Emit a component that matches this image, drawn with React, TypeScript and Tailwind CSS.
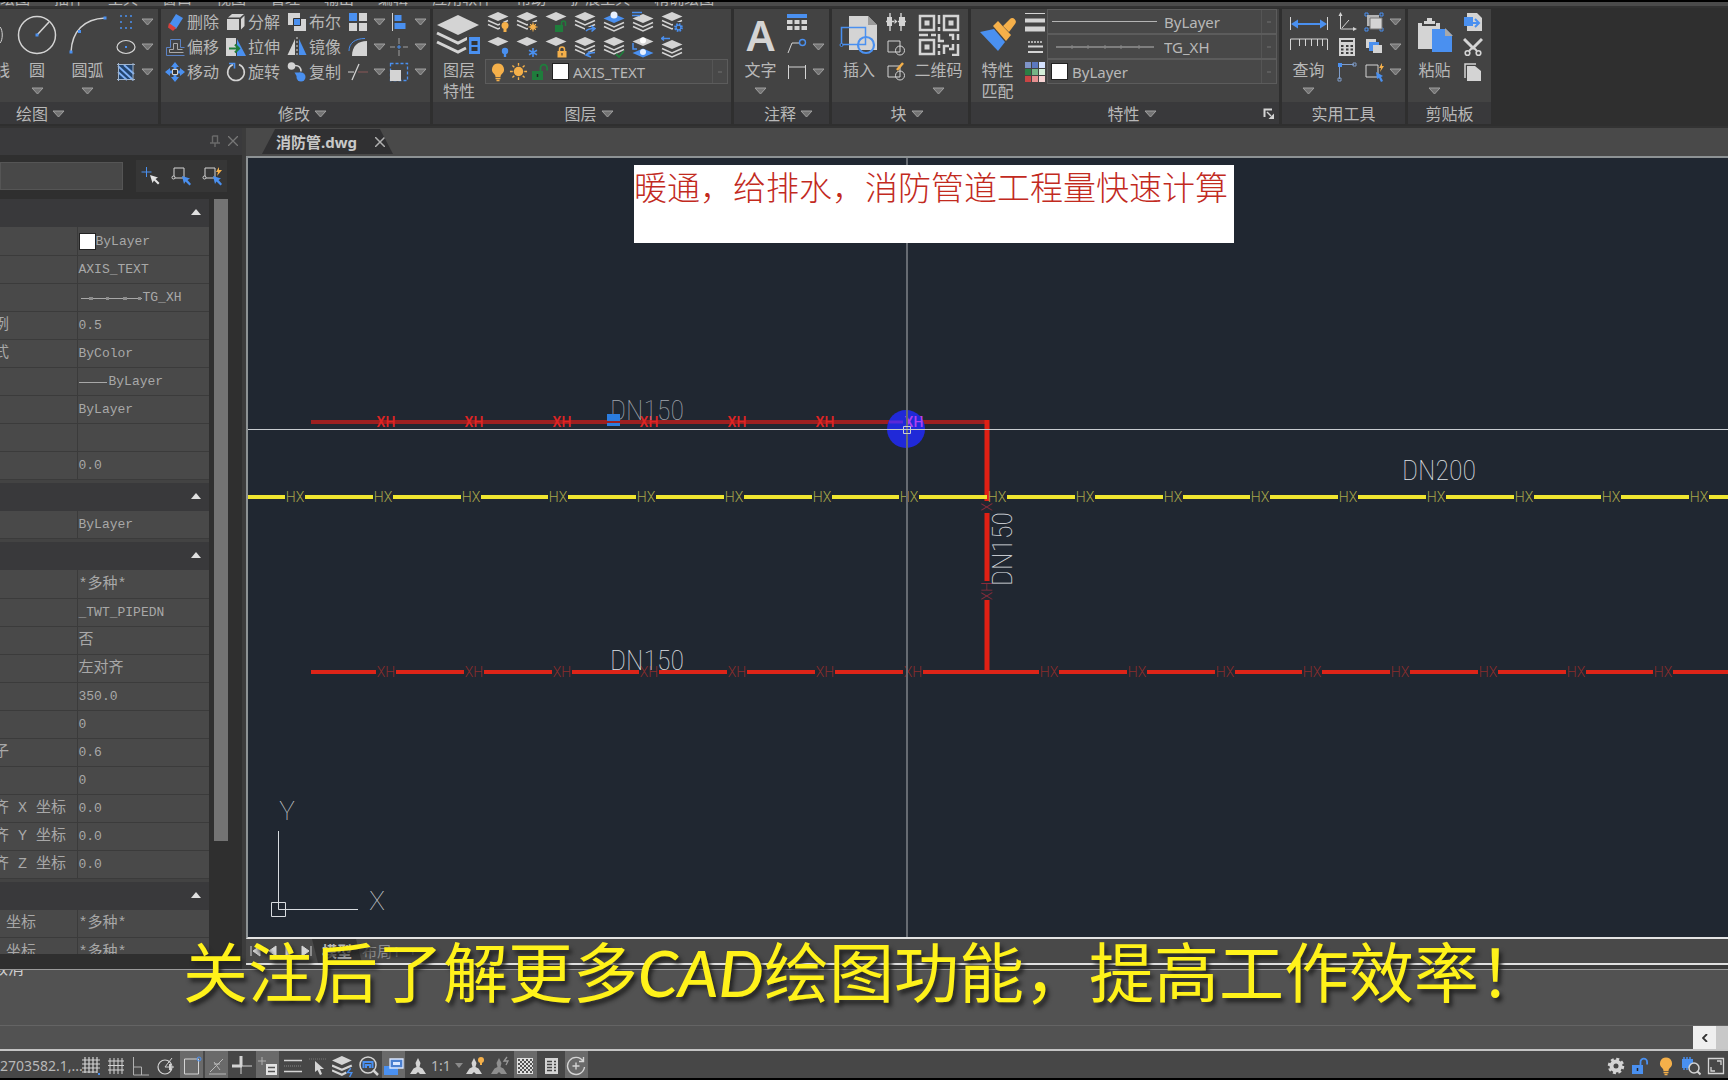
import type { ReactNode } from 'react'

const W = '#d4d4d4'
const B = '#4a90f0'
const O = '#f5b04a'
const G = '#1f7d3c'

interface IconProps {
  children: ReactNode
  className?: string
  box?: string
}

function Icon({ children, className = 'size-5', box = '0 0 20 20' }: IconProps) {
  return (
    <svg viewBox={box} className={`${className} shrink-0`} fill="none" aria-hidden="true">
      {children}
    </svg>
  )
}

function Caret() {
  return (
    <svg viewBox="0 0 13 8" className="h-2 w-[13px] shrink-0" aria-hidden="true">
      <path d="M1 1h11L6.500 7z" fill="#747474" stroke="#a0a0a0" />
    </svg>
  )
}

/* ---------- ribbon building blocks ---------- */

interface PanelProps {
  title: string
  width: string
  caret?: boolean
  corner?: boolean
  titleClass?: string
  children: ReactNode
}

function Panel({ title, width, caret = true, corner, titleClass, children }: PanelProps) {
  const align = titleClass ?? (caret ? 'justify-center pl-3.5' : 'justify-center')
  return (
    <section className={`${width} flex shrink-0 flex-col bg-[#434343]`}>
      <div className="flex h-[93px]">{children}</div>
      <div className={`flex h-[22px] items-center gap-1 bg-[#39393b] pt-0.5 ${align}`}>
        <span>{title}</span>
        {caret && <Caret />}
        {corner && (
          <button aria-label="特性设置" className="absolute right-1">
            <Icon className="h-3 w-3" box="0 0 12 12">
              <path d="M1.500 9V1.500H9" stroke={W} strokeWidth="2" />
              <path d="M4 4l4 4" stroke={W} strokeWidth="1.500" />
              <path d="M11 5.500V11H5.500z" fill={W} />
            </Icon>
          </button>
        )}
      </div>
    </section>
  )
}

interface BigProps {
  icon: ReactNode
  lines: string[]
  width: string
  caret?: boolean
}

function BigButton({ icon, lines, width, caret }: BigProps) {
  return (
    <button className={`${width} flex shrink-0 flex-col items-center pt-px`}>
      <span className="flex h-[50px] items-center justify-center">{icon}</span>
      {lines.map(l => (
        <span key={l} className="h-[21px] leading-[21px] whitespace-nowrap">{l}</span>
      ))}
      {caret && <span className="flex h-5 items-center"><Caret /></span>}
    </button>
  )
}

function Tool({ icon, label }: { icon: ReactNode; label: string }) {
  return (
    <button className="flex h-[25px] w-[61px] items-center gap-0.5 whitespace-nowrap">
      {icon}
      <span>{label}</span>
    </button>
  )
}

function SplitTool({ icon, label, caret = true }: { icon: ReactNode; label: string; caret?: boolean }) {
  return (
    <button aria-label={label} className="flex h-[25px] items-center gap-[5px]">
      {icon}
      {caret && <Caret />}
    </button>
  )
}

function Combo({ label, value, children }: { label: string; value: string; children?: ReactNode }) {
  return (
    <div className="flex h-[25px] items-center border border-[#5c5c5c] bg-[#484848]">
      {children}
      <select aria-label={label} className="min-w-0 flex-1 appearance-none bg-transparent text-[15px] leading-5">
        <option>{value}</option>
      </select>
      <span className="flex h-full w-[15px] items-center justify-center border-l border-[#555]">
        <span className="h-0.5 w-1 bg-[#5c5c5c]" />
      </span>
    </div>
  )
}

function Swatch() {
  return <span className="size-[17px] shrink-0 border border-[#222] bg-white" />
}

/* ---------- icons ---------- */

function Bulb({ color = O, className = 'h-5 w-4' }: { color?: string; className?: string }) {
  return (
    <Icon className={className} box="0 0 16 20">
      <path d="M8 1.500a6 6 0 0 0-3.600 10.800c.8.8 1.100 1.700 1.100 2.700h5c0-1 .3-1.900 1.100-2.700A6 6 0 0 0 8 1.500z" fill={color} />
      <path d="M5.500 16.500h5M6.500 18.500h3" stroke={color} strokeWidth="1.500" />
    </Icon>
  )
}

function Padlock({ color }: { color: string }) {
  return (
    <Icon className="h-5 w-[18px]" box="0 0 18 20">
      <path d="M1 9h11v9H1z" fill={color} />
      <path d="M9.500 9V6a3.300 3.300 0 0 1 6.600 0v2.500" stroke={color} strokeWidth="1.800" />
      <path d="M6.500 12v3" stroke="#222" strokeWidth="1.500" />
    </Icon>
  )
}

function Sun() {
  return (
    <Icon className="size-[19px]">
      <circle cx="10" cy="10" r="5" fill={O} />
      <path d="M10 1v3M10 16v3M1 10h3M16 10h3M3.600 3.600l2 2M14.400 14.400l2 2M16.400 3.600l-2 2M5.600 14.400l-2 2" stroke={O} strokeWidth="1.400" />
    </Icon>
  )
}

function Layers({ sheets = 2, shift = 0, top = W, children }: { sheets?: number; shift?: number; top?: string; children?: ReactNode }) {
  return (
    <Icon className="h-[23px] w-[22px]" box="0 0 22 23">
      <path d={`M11 ${1 + shift}L21.5 ${5.5 + shift}L11 ${10 + shift}L0.5 ${5.5 + shift}z`} fill={top} />
      {sheets > 0 && <path d={`M1 ${9.5 + shift}l10 4.500 10-4.500`} stroke={W} strokeWidth="1.500" />}
      {sheets > 1 && <path d={`M1 ${13.5 + shift}l10 4.500 10-4.500`} stroke={W} strokeWidth="1.500" />}
      {children}
    </Icon>
  )
}

const layerTools: { label: string; icon: ReactNode }[] = [
  {
    label: '关闭图层',
    icon: (
      <Layers>
        <path d="M13 11h9v11h-9z" fill="#434343" />
        <circle cx="18" cy="14.500" r="3.500" fill={O} />
        <path d="M16.500 17h3v4h-3z" fill={O} />
      </Layers>
    ),
  },
  {
    label: '冻结图层',
    icon: (
      <Layers>
        <path d="M12 11h10v11H12z" fill="#434343" />
        <circle cx="17" cy="16" r="2.800" fill={O} />
        <path d="M17 11.500v9M12.500 16h9M14 13l6 6M20 13l-6 6" stroke={O} />
      </Layers>
    ),
  },
  {
    label: '解锁图层',
    icon: (
      <Layers sheets={0}>
        <path d="M10 14h8v7h-8z" fill={G} />
        <path d="M16.500 14v-2a2 2 0 0 1 4 0v3" stroke={G} strokeWidth="1.500" />
      </Layers>
    ),
  },
  {
    label: '图层匹配',
    icon: (
      <Layers>
        <path d="M11 16h11v6H11z" fill="#434343" />
        <path d="M12 20c2-2 4-2.500 8-2.500M17 15l4 2.500-3.500 3" stroke={B} strokeWidth="1.600" />
      </Layers>
    ),
  },
  {
    label: '置为当前',
    icon: (
      <Layers top={B} shift={2}>
        <circle cx="11" cy="4" r="3.500" fill="#e8f1ff" />
      </Layers>
    ),
  },
  {
    label: '图层列表',
    icon: (
      <Layers shift={2}>
        <path d="M0 1.500h10M0 4.500h8" stroke={B} strokeWidth="1.600" />
      </Layers>
    ),
  },
  {
    label: '图层设置',
    icon: (
      <Layers>
        <path d="M12 11h10v11H12z" fill="#434343" />
        <circle cx="17.500" cy="16.500" r="3.400" stroke={B} strokeWidth="2" strokeDasharray="1.600 1.070" />
        <circle cx="17.500" cy="16.500" r="2.400" stroke={B} strokeWidth="1.200" />
      </Layers>
    ),
  },
  {
    label: '打开图层',
    icon: (
      <Layers sheets={0}>
        <circle cx="18" cy="15" r="3.200" fill={B} />
        <path d="M16.800 17h2.400v4h-2.400z" fill={B} />
      </Layers>
    ),
  },
  {
    label: '解冻图层',
    icon: (
      <Layers sheets={0}>
        <path d="M17 12v9M13 14.300l8 4.500M21 14.300l-8 4.500" stroke={B} strokeWidth="1.600" />
      </Layers>
    ),
  },
  {
    label: '锁定图层',
    icon: (
      <Layers sheets={0}>
        <path d="M12.500 15h9v6.500h-9z" fill={O} />
        <path d="M14.500 15v-1.500a2.500 2.500 0 0 1 5 0V15" stroke={O} strokeWidth="1.500" />
        <path d="M17 17v2.500" stroke="#333" />
      </Layers>
    ),
  },
  {
    label: '上一图层',
    icon: (
      <Layers>
        <path d="M11 16h11v6H11z" fill="#434343" />
        <path d="M21 16.500c-3 0-5 .5-8 2M16 15.500l-4 3.500 5 2" stroke={B} strokeWidth="1.600" />
      </Layers>
    ),
  },
  {
    label: '图层状态',
    icon: (
      <Layers>
        <path d="M13 18l3 3 5-6" stroke={G} strokeWidth="1.800" />
      </Layers>
    ),
  },
  {
    label: '合并图层',
    icon: (
      <Layers sheets={0}>
        <path d="M11 12.500l10.500 4.500L11 21.500.500 17z" fill={B} />
        <circle cx="11" cy="4.500" r="3" fill="#fff" />
        <circle cx="11" cy="16" r="3" fill="#e8f1ff" />
        <path d="M1 7v6h4" stroke={B} strokeWidth="1.500" />
      </Layers>
    ),
  },
  {
    label: '删除图层',
    icon: (
      <Layers shift={3}>
        <path d="M0 2.500h9M3 .5l-2.500 2L3 4.500" stroke={B} strokeWidth="1.500" />
      </Layers>
    ),
  },
]

const modifyTools: { label: string; icon: ReactNode }[] = [
  {
    label: '删除',
    icon: <Icon><path d="M11 2l7 4-7 11-7-4z" fill={B} /><path d="M4 11l7 5-3 3-5-3.500z" fill="#d8403c" /></Icon>,
  },
  {
    label: '分解',
    icon: (
      <Icon>
        <path d="M1 7h12v11H1z" fill={W} />
        <path d="M2 5.500L6 2h12l-4 3.500zM15 7l3.500-3.500V14L15 17.500z" fill={W} />
      </Icon>
    ),
  },
  {
    label: '布尔',
    icon: (
      <Icon>
        <path d="M1 1h12v12H1zM7 7h12v12H7z" fill={W} />
        <path d="M6.500 6.500h7v7h-7z" fill={B} stroke="#333" />
      </Icon>
    ),
  },
  {
    label: '偏移',
    icon: (
      <Icon>
        <path d="M1.500 18.500v-8h4v-8h10v8h4M1.500 18.500h18" stroke="#5b82c4" />
        <path d="M4.500 15.500v-3h4v-6h4v6h5M4.500 15.500h14" stroke="#a9a9a9" />
      </Icon>
    ),
  },
  {
    label: '拉伸',
    icon: (
      <Icon>
        <path d="M0 1h10v18H0z" fill={W} />
        <path d="M11 2l9 17h-9z" fill={B} />
        <path d="M3 11.500h9M9 7.500l4 4-4 4" stroke={G} strokeWidth="2.200" />
      </Icon>
    ),
  },
  {
    label: '镜像',
    icon: (
      <Icon>
        <path d="M8 2v16H.500z" fill={W} />
        <path d="M12 2v16h7.500z" fill={B} />
        <path d="M10 0v20" stroke={W} strokeDasharray="2 2" />
      </Icon>
    ),
  },
  {
    label: '移动',
    icon: (
      <Icon>
        <path d="M10 2v16M2 10h16" stroke={B} strokeWidth="3" />
        <path d="M10 0l4 5H6zM10 20l-4-5h8zM0 10l5-4v8zM20 10l-5 4V6z" fill={B} />
        <path d="M7.500 7.500h5v5h-5z" fill="#333" stroke={W} />
      </Icon>
    ),
  },
  {
    label: '旋转',
    icon: (
      <Icon>
        <path d="M13 2.500A8.300 8.300 0 1 1 7 2.500" stroke={W} strokeWidth="1.600" />
        <path d="M3 1.500h5.500v5" stroke={B} strokeWidth="1.600" />
      </Icon>
    ),
  },
  {
    label: '复制',
    icon: (
      <Icon>
        <circle cx="4.500" cy="4" r="3.800" fill={W} />
        <path d="M8 3.500c4 0 6 2 6 6" stroke={W} strokeWidth="1.500" />
        <circle cx="14" cy="15" r="4.500" fill={B} />
        <path d="M7.500 10.500H14l-3.500 5z" fill={B} />
      </Icon>
    ),
  },
]

const modifySplit: { label: string; icon: ReactNode }[] = [
  {
    label: '阵列',
    icon: (
      <Icon>
        <path d="M1 11h8v8H1zM11 11h8v8h-8zM11 1h8v8h-8z" fill={W} />
        <path d="M1 1h8v8H1z" fill={B} />
      </Icon>
    ),
  },
  {
    label: '对齐',
    icon: <Icon><path d="M3.500 1v18" stroke={W} /><path d="M5.500 3h7v6h-7zM5.500 11h11v6h-11z" fill={B} /></Icon>,
  },
  {
    label: '圆角',
    icon: <Icon><path d="M1 14C1 6 7 1.500 17 1.500" stroke={B} /><path d="M4 19C4 9 10 4 19 4v15z" fill={W} /></Icon>,
  },
  {
    label: '打断',
    icon: <Icon><path d="M10 1v6M10 13v6M1 10h5M14 10h5" stroke="#a0a0a0" /><path d="M10 8v4M8 10h4" stroke={B} /></Icon>,
  },
  {
    label: '修剪',
    icon: <Icon><path d="M4 18l7-16" stroke={W} strokeWidth="1.300" /><path d="M0 10h6" stroke={W} /><path d="M10 10h10" stroke="#8a5858" /></Icon>,
  },
  {
    label: '缩放',
    icon: <Icon><path d="M1.500 1.500h17v17h-17z" stroke={B} strokeWidth="1.300" strokeDasharray="3 2" /><path d="M1 8h11v11H1z" fill={W} /></Icon>,
  },
]

/* ---------- ribbon ---------- */

function Qr() {
  return (
    <Icon className="size-[42px]" box="0 0 42 42">
      <g stroke={W} strokeWidth="2.500">
        <path d="M2 2h14v14H2zM26 2h14v14H26zM2 26h14v14H2z" />
        <path d="M21 1v9M21 13v4M1 21h9M13 21h5M21 20v7h5M31 21h4v5M40 20v6M21 30v4M21 37v4M26 40v-8h5M35 30v5h-4M40 30v11h-6" />
      </g>
      <path d="M6.500 6.500h5v5h-5zM30.500 6.500h5v5h-5zM6.500 30.500h5v5h-5z" fill={W} />
    </Icon>
  )
}

function Ribbon() {
  return (
    <div className="flex h-[118px] shrink-0 items-start gap-[3px] overflow-hidden bg-[#2f2f2f] pt-px">
      <Panel title="绘图" width="w-[158px]" titleClass="pl-4">
        <div className="flex w-3 shrink-0 flex-col items-end overflow-hidden pt-px">
          <span className="flex h-[50px] items-center">
            <Icon className="h-5 w-3" box="0 0 12 20"><path d="M0 2c3 3 3 13 0 16" stroke={W} /></Icon>
          </span>
          <span className="pr-0.5 leading-[21px] whitespace-nowrap">多段线</span>
        </div>
        <BigButton
          width="w-[50px]"
          lines={['圆']}
          caret
          icon={
            <Icon className="size-10" box="0 0 40 40">
              <circle cx="20" cy="20" r="18.500" stroke={W} strokeWidth="1.500" />
              <path d="M20 20L32 7" stroke={W} strokeWidth="1.500" />
              <path d="M18.500 18.500h3v3h-3z" fill={B} />
            </Icon>
          }
        />
        <BigButton
          width="w-[51px]"
          lines={['圆弧']}
          caret
          icon={
            <Icon className="size-10" box="0 0 40 40">
              <path d="M3 37C4 16 16 4 37 3" stroke={W} strokeWidth="1.500" />
              <path d="M1.500 35.500h3v3h-3zM10 15h3v3h-3zM35.500 1.500h3v3h-3z" fill={B} />
            </Icon>
          }
        />
        <div className="flex flex-col pl-[3px]">
          <SplitTool label="点" icon={<Icon><path d="M4 4h2M9 4h2M14 4h2M4 10h2M14 10h2M4 16h2M9 16h2M14 16h2" stroke={B} strokeWidth="1.500" /></Icon>} />
          <SplitTool label="椭圆" icon={<Icon><ellipse cx="10" cy="10" rx="9" ry="6.500" stroke={W} strokeWidth="1.200" /><path d="M9 9h2v2H9z" fill={B} /></Icon>} />
          <SplitTool
            label="填充"
            icon={
              <Icon>
                <path d="M2 3h15v15H2z" fill="#23456f" />
                <path d="M2 4l15 14M2 10l9 8M8 3l10 9" stroke="#7fb0f5" strokeWidth="1.800" />
                <path d="M1 2.500h18M1 17.500h18M2.500 1v18M17 1v18" stroke="#9fb3cc" />
              </Icon>
            }
          />
        </div>
      </Panel>

      <Panel title="修改" width="w-[269px]">
        <div className="grid shrink-0 auto-rows-[25px] grid-cols-[61px_61px_61px] content-start pl-1">
          {modifyTools.map(t => <Tool key={t.label} {...t} />)}
        </div>
        <div className="grid auto-rows-[25px] grid-cols-[41px_41px] content-start">
          {modifySplit.map(t => <SplitTool key={t.label} {...t} />)}
        </div>
      </Panel>

      <Panel title="图层" width="w-[298px]">
        <BigButton
          width="w-[52px]"
          lines={['图层', '特性']}
          icon={
            <Icon className="h-[42px] w-[46px]" box="0 0 46 42">
              <path d="M22 1l21 10-21 10L1 11z" fill={W} />
              <path d="M1 19l21 10 12-6M1 28l21 10 8-4" stroke={W} strokeWidth="3" />
              <path d="M31 22h14v20H31z" fill="#434343" />
              <path d="M33 23h11v17H33z" fill={B} />
              <path d="M35.500 27h6v4h-6zM35.500 33h6v4h-6z" fill="#333" />
            </Icon>
          }
        />
        <div className="flex min-w-0 flex-1 flex-col pt-px pr-[3px]">
          <div className="grid h-[49px] grid-cols-[29px_29px_29px_29px_29px_29px_29px] pl-0.5">
            {layerTools.map(t => (
              <button key={t.label} aria-label={t.label} className="flex h-[25px] items-center">{t.icon}</button>
            ))}
          </div>
          <Combo label="图层" value="AXIS_TEXT">
            <span className="flex items-center gap-[3px] pr-1 pl-1">
              <Bulb />
              <Sun />
              <Padlock color={G} />
              <Swatch />
            </span>
          </Combo>
        </div>
      </Panel>

      <Panel title="注释" width="w-[95px]">
        <BigButton
          width="w-[53px]"
          lines={['文字']}
          caret
          icon={<span className="text-[42px] leading-none font-semibold text-[#d4d4d4]">A</span>}
        />
        <div className="flex flex-col">
          <SplitTool
            label="表格"
            caret={false}
            icon={<Icon><path d="M0 2h20v4H0z" fill={B} /><path d="M0 8h5.500v4H0zM7.500 8h5v4h-5zM14.500 8H20v4h-5.500zM0 14h5.500v4H0zM7.500 14h5v4h-5zM14.500 14H20v4h-5.500z" fill={W} /></Icon>}
          />
          <SplitTool label="引线" icon={<Icon><path d="M1 16L5 6h7" stroke={W} /><circle cx="15.500" cy="5.500" r="3" stroke={B} strokeWidth="1.400" /></Icon>} />
          <SplitTool label="标注" icon={<Icon><path d="M1.500 3v14M18.500 3v14M1.500 5h17" stroke={W} /></Icon>} />
        </div>
      </Panel>

      <Panel title="块" width="w-[136px]">
        <BigButton
          width="w-[54px]"
          lines={['插入']}
          icon={
            <Icon className="h-10 w-[40px]" box="0 0 40 40">
              <path d="M10 1h19l9 9v25H10z" fill={W} />
              <path d="M29 1v9h9z" fill="#9b9b9b" />
              <path d="M2.500 12.500h24v17h-24z" stroke={B} strokeWidth="1.500" />
              <circle cx="27" cy="30" r="8" stroke={B} strokeWidth="2.200" />
              <circle cx="2.500" cy="30" r="1.500" fill="#333" stroke={B} />
            </Icon>
          }
        />
        <div className="flex w-[23px] shrink-0 flex-col">
          <SplitTool label="块属性" caret={false} icon={<Icon><path d="M1 5h5v9H1zM13 5h6v9h-6z" fill={W} /><path d="M4 1v18M15 1v18M0 9.500h8M12 9.500h8" stroke={W} strokeWidth="1.400" /><path d="M8.500 7l3 2.500-3 2.500z" fill={W} /></Icon>} />
          <SplitTool label="创建块" caret={false} icon={<Icon><path d="M2 4h12v11H2z" stroke={W} /><circle cx="14" cy="13.500" r="4.500" stroke={W} /></Icon>} />
          <SplitTool label="编辑块" caret={false} icon={<Icon><path d="M2 4h12v11H2z" stroke={W} /><circle cx="14" cy="13.500" r="4.500" stroke={W} /><path d="M11 8l6-7" stroke={O} strokeWidth="2.500" /></Icon>} />
        </div>
        <BigButton width="w-[59px]" lines={['二维码']} caret icon={<Qr />} />
      </Panel>

      <div className="relative flex">
        <Panel title="特性" width="w-[308px]" corner>
          <BigButton
            width="w-[53px]"
            lines={['特性', '匹配']}
            icon={
              <Icon className="h-9 w-[40px]" box="0 0 40 36">
                <path d="M2 15l14-3 11 13-7 9z" fill={B} />
                <path d="M15 9l5-5 13 14-5 6z" fill={O} />
                <path d="M25 9l7-7c3-3 8 2 5 5l-6 8z" fill={O} />
              </Icon>
            }
          />
          <div className="flex shrink-0 flex-col pl-px">
            <SplitTool label="线宽" caret={false} icon={<Icon><path d="M0 1.500h20" stroke={W} /><path d="M0 8.500h20" stroke={W} strokeWidth="4" /><path d="M0 17h20" stroke={W} strokeWidth="5" /></Icon>} />
            <SplitTool label="线型" caret={false} icon={<Icon><path d="M3 5h15" stroke={W} strokeWidth="1.500" strokeDasharray="2 1" /><path d="M3 9.500h15M3 15h15" stroke={W} strokeWidth="2" /></Icon>} />
            <SplitTool
              label="颜色"
              caret={false}
              icon={
                <Icon>
                  <path d="M0 0h6v6H0z" fill="#7e93c8" />
                  <path d="M7 0h6v6H7z" fill="#5b78c0" />
                  <path d="M14 0h6v6h-6z" fill="#d5e3ff" />
                  <path d="M0 7h6v6H0z" fill="#2c7d44" />
                  <path d="M7 7h6v6H7z" fill="#74b586" />
                  <path d="M14 7h6v6h-6z" fill="#d5f0da" />
                  <path d="M0 14h6v6H0z" fill="#c84444" />
                  <path d="M7 14h6v6H7z" fill="#e58f8f" />
                  <path d="M14 14h6v6h-6z" fill="#f7d4d4" />
                </Icon>
              }
            />
          </div>
          <div className="flex min-w-0 flex-1 flex-col pr-0.5 pl-0.5">
            <Combo label="线宽" value="ByLayer">
              <span className="mr-[7px] ml-1 h-px w-[105px] shrink-0 bg-[#b4b4b4]" />
            </Combo>
            <Combo label="线型" value="TG_XH">
              <svg viewBox="0 0 104 8" className="mr-2 ml-1 h-2 w-[104px] shrink-0" aria-hidden="true">
                <path d="M4 4h98" stroke="#b4b4b4" />
                <path d="M20 2v4M36 2v4M53 2v4M69 2v4M87 2v4" stroke="#858585" />
              </svg>
            </Combo>
            <Combo label="颜色" value="ByLayer">
              <span className="flex pr-1 pl-[3px]"><Swatch /></span>
            </Combo>
          </div>
        </Panel>
      </div>

      <Panel title="实用工具" width="w-[123px]" caret={false}>
        <BigButton
          width="w-[53px]"
          lines={['查询']}
          caret
          icon={
            <Icon className="h-9 w-[40px]" box="0 0 40 36">
              <path d="M1.500 0v13M38.500 0v13" stroke={W} />
              <path d="M6 7h28" stroke={B} strokeWidth="2" />
              <path d="M2 7l7-4.500v9zM38 7l-7-4.500v9z" fill={B} />
              <path d="M1.500 33V22h37v11M10.500 22v7M16.500 22v7M22.500 22v7M28.500 22v7M33.500 22v7" stroke={W} />
            </Icon>
          }
        />
        <div className="flex w-[29px] shrink-0 flex-col pl-0.5">
          <SplitTool label="坐标系" caret={false} icon={<Icon><path d="M3.500 2v15H18M5 16l7-8" stroke={W} /><path d="M3.500 0l2 4h-4zM20 17l-4-2v4z" fill={W} /></Icon>} />
          <SplitTool
            label="计算器"
            caret={false}
            icon={<Icon><path d="M2 1h16v18H2z" fill={W} /><path d="M4 4h12M4 9h2.500M9 9h2.500M13.500 9H16M4 12.500h2.500M9 12.500h2.500M13.500 12.500H16M4 16h2.500M9 16h2.500M13.500 16H16" stroke="#3d3d3d" strokeWidth="2" /></Icon>}
          />
          <SplitTool label="点坐标" caret={false} icon={<Icon><path d="M2.500 2v15M3 2.500h14" stroke="#7f9cc8" /><path d="M1 1h4v4H1z" fill={B} /><path d="M1 16h3v3H1zM16 1h3v3h-3z" stroke="#7f9cc8" /></Icon>} />
        </div>
        <div className="flex flex-col">
          <SplitTool label="组" icon={<Icon><path d="M1 1h3v3H1zM16 1h3v3h-3zM1 16h3v3H1zM16 16h3v3h-3z" stroke={B} /><path d="M3 3h12v11H3z" fill="#b5b5b5" /><path d="M6 6h12v11H6z" fill={W} stroke="#777" /></Icon>} />
          <SplitTool label="绘图次序" icon={<Icon><path d="M2 2h10v9H2z" fill={W} /><path d="M5 5h10v9H5z" fill={B} /><path d="M9 8h9v8H9z" fill={W} /></Icon>} />
          <SplitTool label="快速选择" icon={<Icon><path d="M2 3h12v12H2z" stroke={W} /><path d="M18 1l-3 5h2l-1 4 4-6h-2z" fill={O} /><path d="M12 10l7 4-2 1 2 4-2 1-2-4-2 1z" fill={B} /></Icon>} />
        </div>
      </Panel>

      <Panel title="剪贴板" width="w-[83px]" caret={false}>
        <BigButton
          width="w-[53px]"
          lines={['粘贴']}
          caret
          icon={
            <Icon className="h-9 w-9" box="0 0 36 36">
              <path d="M1 6h22v26H1z" fill={W} />
              <path d="M5 4h14v5H5z" fill="#434343" />
              <path d="M7 4h3V1h5v3h3v3H7z" fill={W} />
              <path d="M15 12h14l6 6v17H15z" fill={B} />
              <path d="M28 11l8 8h-8z" fill="#a9a9a9" />
            </Icon>
          }
        />
        <div className="flex flex-col pl-0.5">
          <SplitTool label="选择性粘贴" caret={false} icon={<Icon><path d="M4 1h10l5 5v13H4z" fill={W} /><path d="M1 5h9v9H1z" fill={B} /><path d="M4 11h11M12 7l4 4-4 4" stroke={B} strokeWidth="2" /></Icon>} />
          <SplitTool label="剪切" caret={false} icon={<Icon><path d="M1 2l9 9 9-9" stroke={W} strokeWidth="3" /><path d="M10 10l-4 4M10 10l4 4" stroke={W} strokeWidth="2" /><circle cx="4.500" cy="16" r="2.300" stroke={W} strokeWidth="1.600" /><circle cx="15.500" cy="16" r="2.300" stroke={W} strokeWidth="1.600" /></Icon>} />
          <SplitTool label="复制" caret={false} icon={<Icon><path d="M2 16V2h11" stroke={W} strokeWidth="1.500" /><path d="M4 4h8l6 5v10H4z" fill={W} /></Icon>} />
        </div>
      </Panel>
    </div>
  )
}

/* ---------- properties palette ---------- */

interface Prop {
  label?: string
  value?: string
  cjk?: boolean
  deco?: ReactNode
}

const groups: Prop[][] = [
  [
    { value: 'ByLayer', deco: <Swatch /> },
    { value: 'AXIS_TEXT' },
    {
      value: 'TG_XH',
      deco: (
        <svg viewBox="0 0 64 8" className="h-2 w-16 shrink-0" aria-hidden="true">
          <path d="M2 4.500h61" stroke="#a8a8a8" />
          <path d="M10 3h4v3h-4zM27 3h3v3h-3zM44 3h4v3h-4zM59 3h3v3h-3z" fill="#8c8c8c" />
        </svg>
      ),
    },
    { label: '线型比例', value: '0.5' },
    { label: '打印样式', value: 'ByColor' },
    { value: 'ByLayer', deco: <span className="mr-0.5 h-px w-7 bg-[#a8a8a8]" /> },
    { value: 'ByLayer' },
    {},
    { value: '0.0' },
  ],
  [{ value: 'ByLayer' }],
  [
    { value: '*多种*', cjk: true },
    { value: '_TWT_PIPEDN' },
    { value: '否', cjk: true },
    { value: '左对齐', cjk: true },
    { value: '350.0' },
    { value: '0' },
    { label: '宽度因子', value: '0.6' },
    { value: '0' },
    { label: '文字对齐 X 坐标', value: '0.0' },
    { label: '文字对齐 Y 坐标', value: '0.0' },
    { label: '文字对齐 Z 坐标', value: '0.0' },
  ],
  [
    { label: '位置 X 坐标', value: '*多种*', cjk: true },
    { label: '位置 Y 坐标', value: '*多种*', cjk: true },
  ],
]

const mono = "font-['Liberation_Mono','Noto_Sans_CJK_SC',monospace]"

function Group({ rows }: { rows: Prop[] }) {
  return (
    <div className="shrink-0 pb-[3px]">
      <button aria-label="折叠分组" className="flex h-7 w-full items-center justify-end bg-[#39393b] pr-2 pb-0.5">
        <svg viewBox="0 0 10 6" className="h-1.5 w-2.5"><path d="M0 6l5-6 5 6z" fill="#e0e0e0" /></svg>
      </button>
      <table className="-ml-[51px] w-[260px] table-fixed border-collapse bg-[#494949] text-[#a8a8a8]">
        <tbody>
          {rows.map((r, i) => (
            <tr key={i} className="h-7 border-b border-[#3b3b3b]">
              <th scope="row" className="w-[128px] border-r border-[#3b3b3b] p-0 pt-0.5 text-left text-[15px] leading-5 font-normal whitespace-nowrap">
                {r.label}
              </th>
              <td className={`p-0 pt-0.5 pl-px leading-5 whitespace-nowrap ${r.cjk ? 'text-[15px]' : 'text-[13px]'}`}>
                <span className="flex items-center">
                  {r.deco}
                  {r.value}
                </span>
              </td>
            </tr>
          ))}
        </tbody>
      </table>
    </div>
  )
}

function Properties() {
  return (
    <aside className="flex w-[246px] shrink-0 flex-col overflow-hidden border-r-4 border-[#3c3c3c] bg-[#2f2f2f]">
      <div className="flex h-[27px] shrink-0 items-center justify-end gap-2 bg-[#3a3a3c] pr-1 pb-0.5 text-[#707070]">
        <button aria-label="固定">
          <Icon className="h-3 w-2.5" box="0 0 10 12"><path d="M2.500 1h5v7M2.500 1v7M0 8h10M5 8v4" stroke="#6a6a6a" strokeWidth="1.400" /></Icon>
        </button>
        <button aria-label="关闭面板">
          <Icon className="size-2.5" box="0 0 10 10"><path d="M0 0l10 10M10 0L0 10" stroke="#777" strokeWidth="1.300" /></Icon>
        </button>
      </div>
      <div className="flex h-11 shrink-0 items-center justify-between pr-[15px] pb-0.5">
        <select aria-label="选择对象" className="h-7 w-[123px] appearance-none border border-[#555] bg-[#484848]">
          <option></option>
        </select>
        <div className="flex h-8 w-[91px] items-center justify-around bg-[#363636]">
          <button aria-label="拾取加点">
            <Icon><path d="M5.500 1v10M.500 6h10" stroke={B} /><path d="M9 9l8 2.500-2.500 1.500 4 4-1.500 1.500-4-4-1.500 2.500z" fill="#e4e4e4" /></Icon>
          </button>
          <button aria-label="选择对象">
            <Icon><path d="M3 2h10v10H3z" stroke={W} /><circle cx="2.500" cy="11.500" r="1.500" fill="#333" stroke={W} /><path d="M11 10l8 2.500-2.500 1.500 3.500 4-1.500 1.500-4-4-1.500 2.500z" fill={B} /></Icon>
          </button>
          <button aria-label="快速选择">
            <Icon><path d="M3 2h10v10H3z" stroke={W} /><circle cx="2.500" cy="11.500" r="1.500" fill="#333" stroke={W} /><path d="M17 1l-3 5h2l-1 4 5-6h-3z" fill={O} /><path d="M11 10l8 2.500-2.500 1.500 3.500 4-1.500 1.500-4-4-1.500 2.500z" fill={B} /></Icon>
          </button>
        </div>
      </div>
      <div className="flex min-h-0 flex-1 pb-[15px]">
        <div className={`flex w-[209px] shrink-0 flex-col overflow-hidden bg-[#434343] ${mono}`}>
          {groups.map((rows, i) => <Group key={i} rows={rows} />)}
        </div>
        <div className="ml-[5px] w-3.5">
          <div className="h-[85%] bg-[#737373]" />
        </div>
      </div>
    </aside>
  )
}

/* ---------- drawing canvas ---------- */

const STEP = 1404 / 16
const marks = (start: number, count: number) =>
  Array.from({ length: count }, (_, n) => Math.round(start + n * STEP))

interface PipeProps {
  y: number
  from: number
  to: number
  at: number[]
  color: string
  markColor: string
  text: string[]
}

function Pipe({ y, from, to, at, color, markColor, text }: PipeProps) {
  const starts = [from, ...at.map(x => x + 10)]
  const ends = [...at.map(x => x - 10), to]
  return (
    <g>
      {starts.map((x, i) => (
        <line key={x} x1={x} x2={ends[i]} y1={y} y2={y} stroke={color} strokeWidth="4" />
      ))}
      {at.map((x, i) => (
        <text key={x} x={x} y={y + 5} fill={markColor} textAnchor="middle" className="text-[14px] font-light">
          {text[i] ?? text[0]}
        </text>
      ))}
    </g>
  )
}

const yellowMarks = marks(295, 17)
const upperMarks = marks(386, 7)
const lowerMarks = [...marks(386, 7), ...marks(1049, 8)]
const lowerText = lowerMarks.map(x => (x < 987 ? 'XH' : 'HX'))

function Drawing() {
  return (
    <svg className="absolute inset-0 h-full w-full font-['Roboto',sans-serif]" role="img" aria-label="消防管">
      <g transform="translate(-248 -158)">
        <line x1="311" x2="987" y1="422" y2="422" stroke="#9c1f20" strokeWidth="4" />
        <path d="M987 420v81M987 513v68M987 600v72" stroke="#e02014" strokeWidth="5" />
        {upperMarks.map(x => (
          <text key={x} x={x} y="427" fill="#e02424" textAnchor="middle" className="text-[14px] font-medium">XH</text>
        ))}
        <Pipe y={497} from={248} to={4000} at={yellowMarks} color="#f0e630" markColor="#a8a84a" text={['HX']} />
        <Pipe y={672} from={311} to={4000} at={lowerMarks} color="#dd2418" markColor="#8a2c2c" text={lowerText} />
        <g fill="#8a2c3c" textAnchor="middle" className="text-[14px] font-light">
          <text transform="translate(992 507) rotate(-90)">X</text>
          <text transform="translate(992 591) rotate(-90)">XH</text>
        </g>
        <g fill="#e0e4e8" className="font-['Roboto_Condensed','Roboto',sans-serif] text-[28px] font-thin">
          <text x="610" y="420" fill="#a0a6ae">DN150</text>
          <text x="610" y="670">DN150</text>
          <text x="1402" y="480">DN200</text>
          <text transform="translate(1012 586) rotate(-90)">DN150</text>
        </g>
        <path d="M607 414h13v7h-13zM607 423h13v3h-13z" fill="#2b7de0" />
        <circle cx="906" cy="429" r="19" fill="#2029d8" />
        <text x="914" y="427" fill="#b040f0" textAnchor="middle" className="text-[14px] font-medium">XH</text>
        <path d="M889 422h14" stroke="#5a28d8" strokeWidth="3" />
        <path d="M907 158v781" stroke="#666b72" strokeWidth="2" />
        <path d="M248 429.500h3800" stroke="#c8ccd0" />
        <path d="M903.500 426.500h7v7h-7z" stroke="#c8ccd0" fill="none" />
        <path d="M278.500 831v78.500H358M271.500 902.500h14v14h-14z" stroke="#d8dce0" fill="none" />
        <g fill="#c8ccd0" textAnchor="middle" className="text-[26px] font-thin">
          <text x="287" y="820">Y</text>
          <text x="377" y="910">X</text>
        </g>
      </g>
    </svg>
  )
}

function Workspace() {
  return (
    <main className="flex min-w-0 flex-1 flex-col bg-[#494949]">
      <div className="flex h-7 shrink-0 items-end pb-0.5 pl-4">
        <div className="flex h-[25px] w-[131px] items-center justify-between bg-[#303032] pr-2 pl-3.5 [clip-path:polygon(10%_0,90%_0,100%_100%,0_100%)]">
          <button className="text-[15px] leading-5 font-bold whitespace-nowrap text-[#c8c8c8]">消防管.dwg</button>
          <button aria-label="关闭">
            <Icon className="size-2.5" box="0 0 10 10"><path d="M0 0l10 10M10 0L0 10" stroke="#b0b0b0" strokeWidth="1.500" /></Icon>
          </button>
        </div>
      </div>
      <div className="relative min-h-0 flex-1 overflow-hidden border-t-2 border-b-2 border-l-2 border-t-[#8d9294] border-b-[#e4e4e4] border-l-[#8d9294] bg-[#202731]">
        <Drawing />
        <div className="absolute top-[7px] left-[386px] h-[78px] w-[600px] bg-white text-[33px] leading-[46px] font-light whitespace-nowrap text-[#c22a1e]">
          暖通，给排水，消防管道工程量快速计算
        </div>
      </div>
      <div className="flex h-6 shrink-0 items-center pl-1 text-[15px] leading-5">
        <Icon className="h-3 w-[62px]" box="0 0 62 12">
          <path d="M1 1v10M10 1v10L3 6zM26 1v10l-7-5zM36 1v10l7-5zM52 1v10l7-5zM61 1v10" fill={W} stroke={W} />
        </Icon>
        <button className="h-full bg-[#333] px-2.5 font-bold [clip-path:polygon(0_0,88%_0,100%_100%,12%_100%)]">模型</button>
        <button className="text-[#8f8f8f]">布局1</button>
        <button className="px-2 text-[#8f8f8f]">+</button>
      </div>
      <div className="h-0.5 shrink-0 bg-[#e0e0e0]" />
      <div className="h-1 shrink-0 bg-[#3a3a3a]" />
    </main>
  )
}

/* ---------- status bar ---------- */

function Person({ color = W, children }: { color?: string; children?: ReactNode }) {
  return (
    <Icon>
      <path d="M9 2l2.500 5-1 4 3 1.500L17 18h-6l-2-2-2 2H1l3.500-5.500 3-1.500-1-4z" fill={color} />
      {children}
    </Icon>
  )
}

const modes: { label: string; on?: boolean; icon: ReactNode }[] = [
  { label: '栅格', icon: <Icon><path d="M4 1v16M8 1v16M12 1v16M16 1v16M1 4h18M1 8h18M1 12h18M1 16h15" stroke={W} strokeWidth="1.200" /><path d="M17 17h2v2h-2z" fill={B} /></Icon> },
  { label: '捕捉', icon: <Icon><path d="M4 2v16M8 2v16M12 2v16M16 2v16M2 5h16M2 9.500h16M2 14h16" stroke={W} /></Icon> },
  { label: '正交', icon: <Icon><path d="M2.500 1v18H18M2.500 11h8v8" stroke="#b0b0b0" /></Icon> },
  { label: '极轴', icon: <Icon><circle cx="9" cy="11" r="7" stroke={W} strokeWidth="1.200" /><path d="M9 11h9M9 11l7-9" stroke={W} /><path d="M14 8v6" stroke={W} strokeWidth="2" /></Icon> },
  { label: '对象捕捉', on: true, icon: <Icon><path d="M2.500 3h14v15h-14z" stroke={W} /><circle cx="17" cy="3" r="2" stroke={B} /></Icon> },
  { label: '对象追踪', on: true, icon: <Icon><path d="M2 18h17M3 16L16 3M7 6l6 8M13 8h-6" stroke="#b8b8b8" /></Icon> },
  { label: '动态UCS', icon: <Icon><path d="M9 0v10M0 10h10" stroke={W} strokeWidth="3" /><path d="M9 10v8M10 10h10" stroke={W} /></Icon> },
  { label: '动态输入', on: true, icon: <Icon><path d="M4 1v8M0 5h8" stroke="#b0b0b0" /><path d="M8 8h11v11H8z" fill="#e4e4e4" /><path d="M10 11.500h7M10 15.500h7" stroke="#555" strokeWidth="1.500" /></Icon> },
  { label: '线宽', icon: <Icon><path d="M1 4.500h18M1 15.500h18" stroke={W} strokeWidth="1.400" /><path d="M1 10h18" stroke="#888" strokeDasharray="1 1" /></Icon> },
  { label: '循环选择', icon: <Icon><path d="M1 3h17" stroke="#777" strokeDasharray="1 1" /><path d="M7 5l9 8h-4l2 5-2 1-2.500-5L7 16z" fill={W} /></Icon> },
  { label: '图层显示', icon: <Icon className="size-[22px]"><path d="M9 1l9 4-9 4-9-4z" fill={W} /><path d="M0 9.500l9 4 9-4M0 14l9 4 4-2" stroke={W} strokeWidth="2" /><path d="M17 12l-3 4h4l-2 4" stroke={B} strokeWidth="1.300" /></Icon> },
  { label: '查找', icon: <Icon><circle cx="9" cy="9" r="8" stroke={W} strokeWidth="1.500" /><path d="M4.500 12V6h9v6M7 12V9h4v3" stroke={B} strokeWidth="2" /><path d="M14 14l5 5" stroke={W} strokeWidth="2.500" /></Icon> },
  { label: '窗口切换', on: true, icon: <Icon><path d="M0 10h14v9H0z" fill={B} /><path d="M6 3h13v9H6z" fill="#4a7fd0" stroke="#dbe7ff" strokeWidth="1.300" /><path d="M9 6h7v3H9z" fill="#dbe7ff" /></Icon> },
  { label: '注释比例', icon: <Person /> },
]

const modesAfter: { label: string; on?: boolean; icon: ReactNode }[] = [
  { label: '注释可见性', icon: <Person><circle cx="16" cy="4" r="3" fill={O} /><path d="M15 6h2v3h-2z" fill={O} /></Person> },
  { label: '自动缩放', icon: <Person color="#8e8e8e"><path d="M17 1l-3 4h4l-2 4" stroke="#999" strokeWidth="1.300" /></Person> },
  {
    label: '透明度',
    on: true,
    icon: (
      <Icon>
        <path d="M2 2h16v16H2z" fill="#e0e0e0" />
        <path d="M3 4h15M3 8h15M3 12h15M3 16h15" stroke="#555" strokeWidth="2" strokeDasharray="2 2" />
        <path d="M5 6h13M5 10h13M5 14h13" stroke="#555" strokeWidth="2" strokeDasharray="2 2" />
      </Icon>
    ),
  },
  { label: '快捷特性', icon: <Icon><path d="M4 2h13v16H4z" fill={W} /><path d="M6 5.500h5M6 8.500h5M6 11.500h5M6 14.500h5M13 5.500h2M13 8.500h2M13 11.500h2M13 14.500h2" stroke="#444" strokeWidth="1.500" /></Icon> },
  { label: '刷新', on: true, icon: <Icon><path d="M17 5a8.500 8.500 0 1 0 1.500 6M17.500 1v4.500H13M10 6.500v7M6.500 10h7" stroke={W} strokeWidth="1.400" /></Icon> },
]

function ModeButton({ label, on, icon }: { label: string; on?: boolean; icon: ReactNode }) {
  return (
    <button aria-label={label} className={`flex h-full w-[23px] items-center justify-center pt-0.5 ${on ? 'bg-[#6a6a6a]' : ''}`}>
      {icon}
    </button>
  )
}

function StatusBar() {
  return (
    <footer className="flex h-[29px] shrink-0 items-center border-b-2 border-black bg-[#474747]">
      <span className="w-[79px] shrink-0 pt-0.5 text-[14px] leading-5 whitespace-nowrap">2703582.1,...</span>
      <div className="grid h-full w-[354px] grid-cols-14">
        {modes.map(m => <ModeButton key={m.label} {...m} />)}
      </div>
      <button className="-ml-0.5 flex w-8 items-center gap-1 pt-0.5 text-[14px] leading-5">
        1:1
        <Icon className="h-1.5 w-2" box="0 0 8 6"><path d="M0 0h8L4 5z" fill="#8a8a8a" /></Icon>
      </button>
      <div className="grid h-full w-[127px] grid-cols-5">
        {modesAfter.map(m => <ModeButton key={m.label} {...m} />)}
      </div>
      <div className="ml-auto flex items-center gap-[5px] pt-0.5 pr-0.5">
        <button aria-label="设置">
          <Icon><circle cx="10" cy="10" r="4.500" stroke={W} strokeWidth="4" /><circle cx="10" cy="10" r="7" stroke={W} strokeWidth="2.500" strokeDasharray="3 2.500" /></Icon>
        </button>
        <button aria-label="解锁界面" className="w-5"><Padlock color={B} /></button>
        <button aria-label="隔离对象" className="flex w-5 justify-center"><Bulb /></button>
        <button aria-label="硬件加速">
          <Icon><path d="M1 3h11v9H1z" fill={B} /><path d="M3 1v13M6 1v13M9 1v13" stroke={B} strokeWidth="1.500" /><circle cx="13" cy="12" r="5" fill="#474747" stroke={W} strokeWidth="1.500" /><path d="M16.500 15.500l3 3" stroke={W} strokeWidth="2" /></Icon>
        </button>
        <button aria-label="全屏显示">
          <Icon><path d="M2.500 2.500h15v15h-15z" stroke={W} strokeWidth="1.300" /><path d="M11 5h4v4M5 11v4h4" stroke={W} strokeWidth="1.300" /></Icon>
        </button>
      </div>
    </footer>
  )
}

/* ---------- page ---------- */

const menus = ['绘图', '插件', '工具', '窗口', '视图', '管理', '输出', '编辑', '应用软件', '帮助', '扩展工具', '精确绘图']

export default function App() {
  return (
    <div className="relative flex h-screen w-full flex-col overflow-hidden bg-[#3a3a3a] font-['Noto_Sans','Noto_Sans_CJK_SC',sans-serif] text-[16px] leading-5 text-[#b8b8b8]">
      <nav className="flex h-2 shrink-0 items-end gap-6 overflow-hidden border-t-2 border-b-2 border-t-black border-b-[#333] bg-[#4b4b4b] text-[15px] leading-none">
        {menus.map((m, i) => (
          <a key={i} href="#" className="shrink-0">{m}</a>
        ))}
      </nav>
      <Ribbon />
      <div className="h-0.5 shrink-0 bg-[#333]" />
      <div className="flex min-h-0 flex-1">
        <Properties />
        <Workspace />
      </div>
      <div className="h-20 shrink-0 border-t border-[#9a9a9a] bg-[#525252]">
        <div className="h-[55px] overflow-hidden">
          <p className="-mt-3 -ml-2 text-[16px] leading-5 text-[#d0d0d0]">取消</p>
        </div>
        <div className="flex h-6 justify-end border-t border-[#646464]">
          <button aria-label="向左滚动" className="flex h-full w-[23px] items-center justify-center bg-[#efefef]">
            <Icon className="h-2 w-1.5" box="0 0 6 8"><path d="M5 0L1 4l4 4" stroke="#333" strokeWidth="1.800" /></Icon>
          </button>
          <span className="w-3 bg-[#c8c8c8]" />
        </div>
      </div>
      <div className="h-0.5 shrink-0 bg-[#c4c4c4]" />
      <StatusBar />
      <p className="absolute bottom-[67px] left-[183px] text-[65px] leading-[80px] font-normal whitespace-nowrap text-[#fff21a] [text-shadow:3px_4px_4px_#222]">
        关注后了解更多<em className="font-['Lato','Noto_Sans',sans-serif] text-[64px] font-medium">CAD</em>绘图功能，提高工作效率！
      </p>
    </div>
  )
}
